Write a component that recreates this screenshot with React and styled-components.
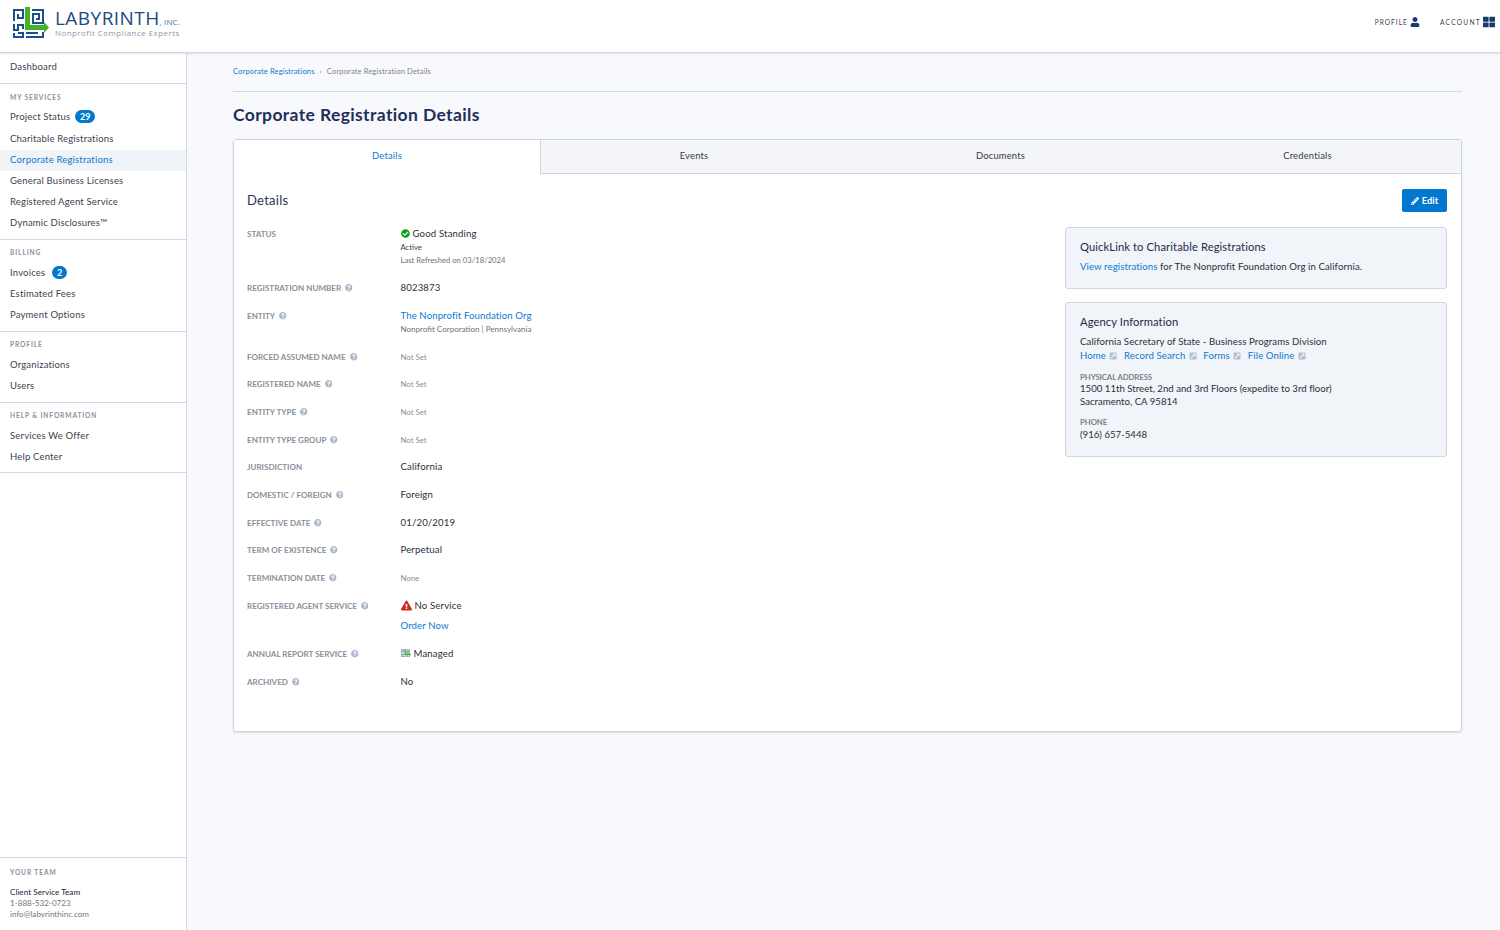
import React from "react";
import styled, { createGlobalStyle } from "styled-components";
import {
  FaCheckCircle,
  FaExclamationTriangle,
  FaExternalLinkSquareAlt,
  FaPencilAlt,
  FaQuestionCircle,
  FaThLarge,
  FaUser,
} from "react-icons/fa";

const GlobalStyle = createGlobalStyle`
  html, body { margin: 0; padding: 0; }
  body {
    background: #f8f9fc;
    color: #2b2f3a;
    font-family: "Lato", "Open Sans", sans-serif;
    font-size: 10px;
  }
  * { box-sizing: border-box; }
  a { color: #0b7ad1; text-decoration: none; }
`;

const Page = styled.div`
  width: 1500px;
  height: 930px;
  display: flex;
  flex-direction: column;
  overflow: hidden;
`;

const Header = styled.header`
  height: 53px;
  flex: none;
  background: #fff;
  border-bottom: 1px solid #d3d9e4;
  box-shadow: 0 1px 2px rgba(50, 60, 90, 0.12);
  display: flex;
  align-items: center;
  justify-content: space-between;
  padding: 0 5px 0 12px;
  position: relative;
  z-index: 2;
`;

const Brand = styled.div`
  display: flex;
  align-items: center;
  gap: 6px;
  margin-top: -7px;
`;

const BrandText = styled.div`
  display: flex;
  flex-direction: column;
`;

const BrandName = styled.div`
  font-size: 19px;
  line-height: 20px;
  letter-spacing: 0.45px;
  color: #1d4a85;
  font-family: "Open Sans", sans-serif;
  white-space: nowrap;
  small {
    font-size: 8px;
    line-height: 0;
    letter-spacing: 0.1px;
    color: #3f6ea8;
  }
`;

const BrandTag = styled.div`
  font-family: "Open Sans", sans-serif;
  font-size: 7.9px;
  line-height: 10px;
  letter-spacing: 0.5px;
  color: #8c97aa;
  white-space: nowrap;
`;

const HeaderNav = styled.nav`
  display: flex;
  align-items: center;
  gap: 20px;
  margin-top: -8px;
`;

const HeaderLink = styled.div`
  display: flex;
  align-items: center;
  gap: 2px;
  font-size: 6.6px;
  letter-spacing: ${(p) => p.$spacing || 1}px;
  color: #3a3f55;
  svg {
    color: #1b3a6b;
    font-size: ${(p) => p.$iconSize || 10}px;
  }
`;

const Body = styled.div`
  flex: 1;
  display: flex;
  min-height: 0;
`;

const Sidebar = styled.aside`
  width: 187px;
  flex: none;
  background: #fff;
  border-right: 1px solid #d3d9e4;
  display: flex;
  flex-direction: column;
`;

const NavGroup = styled.div`
  border-bottom: 1px solid #d3d9e4;
  padding: ${(p) => p.$pad || "6px 0 6px"};
`;

const NavHeading = styled.div`
  font-size: 6.6px;
  font-weight: 700;
  line-height: 12px;
  letter-spacing: 0.9px;
  color: #8b909c;
  padding: 0 ${(p) => (p.$flush ? 0 : 10)}px;
  margin-bottom: ${(p) => p.$gap ?? 4}px;
  text-transform: uppercase;
`;

const NavItem = styled.a`
  display: flex;
  align-items: center;
  height: ${(p) => p.$height || 21}px;
  padding: 0 10px ${(p) => (p.$height ? 2 : 0)}px;
  font-size: 9.5px;
  letter-spacing: 0.18px;
  color: #3d4250;
  ${(p) =>
    p.$active &&
    `
    color: #0b7ad1;
    background: #f0f3f7;
    margin: 1px 0 -1px;
    padding-bottom: 2px;
  `}
`;

const Pill = styled.span`
  margin-left: ${(p) => p.$gap || 5}px;
  min-width: ${(p) => (p.$wide ? 20 : 15)}px;
  height: 13px;
  border-radius: 7px;
  background: #0277d0;
  color: #fff;
  font-size: 9px;
  font-weight: 700;
  line-height: 13px;
  text-align: center;
`;

const TeamBlock = styled.div`
  margin-top: auto;
  border-top: 1px solid #d3d9e4;
  padding: 8px 10px 10px;
`;

const TeamName = styled.div`
  margin-top: 9px;
  font-size: 8.2px;
  line-height: 11px;
  color: #1f2330;
`;

const TeamLine = styled.div`
  font-size: 8.1px;
  line-height: 11px;
  color: #70757f;
`;

const Main = styled.main`
  flex: 1;
  padding: 0 38px 0 46px;
`;

const Breadcrumb = styled.div`
  height: 39px;
  padding-top: 13px;
  line-height: 10px;
  font-size: 7.6px;
  letter-spacing: 0.12px;
  color: #7d828c;
  border-bottom: 1px solid #d3d9e4;
  display: flex;
  gap: 5px;
`;

const PageTitle = styled.h1`
  margin: 0;
  height: 47px;
  padding-top: 12px;
  font-size: 17.5px;
  line-height: 22px;
  font-weight: 700;
  letter-spacing: 0.37px;
  color: #1e2f5a;
`;

const Panel = styled.section`
  height: 593px;
  background: #fff;
  border: 1px solid #cfd6e2;
  border-radius: 3px;
  box-shadow: 0 1px 2px rgba(50, 60, 90, 0.15);
`;

const Tabs = styled.div`
  display: grid;
  grid-template-columns: 306px 1fr 1fr 1fr;
  height: 34px;
`;

const Tab = styled.div`
  display: flex;
  align-items: center;
  justify-content: center;
  padding-bottom: 2px;
  font-size: 9.4px;
  letter-spacing: 0.2px;
  color: ${(p) => (p.$active ? "#0b7ad1" : "#363b48")};
  background: ${(p) => (p.$active ? "#fff" : "#f3f5f8")};
  border-bottom: 1px solid ${(p) => (p.$active ? "transparent" : "#cfd6e2")};
  border-left: ${(p) => (p.$divided ? "1px solid #cfd6e2" : "none")};
`;

const PanelBody = styled.div`
  display: flex;
  justify-content: space-between;
  padding: 15px 14px 0 13px;
`;

const Details = styled.div`
  flex: none;
  width: 600px;
`;

const SectionTitle = styled.h2`
  margin: 0 0 15px;
  font-size: 13px;
  line-height: 23px;
  font-weight: 400;
  letter-spacing: 0.27px;
  color: #2a3350;
`;

const Row = styled.div`
  display: grid;
  grid-template-columns: 153.5px 1fr;
  min-height: ${(p) => p.$height || 27.75}px;
`;

const Label = styled.div`
  display: flex;
  align-items: center;
  align-self: start;
  height: 14px;
  gap: 4px;
  font-size: 8.05px;
  font-weight: 700;
  text-transform: uppercase;
  color: #8a8f99;
  svg {
    color: #a9b6c8;
    font-size: 7.5px;
  }
`;

const Value = styled.div`
  font-size: 9.6px;
  line-height: 14px;
  letter-spacing: 0.15px;
  color: ${(p) => (p.$muted ? "#8a8f99" : "#2b2f3a")};
  ${(p) => p.$muted && "font-size: 7.8px; letter-spacing: 0;"}
`;

const IconValue = styled.div`
  display: flex;
  align-items: center;
  gap: 3px;
  height: 14px;
  margin: -1px 0 ${(p) => p.$bottom || 0}px;
  font-size: 9.6px;
  letter-spacing: 0.15px;
  svg {
    flex: none;
  }
`;

const SubLine = styled.div`
  font-size: ${(p) => p.$size || 7.7}px;
  line-height: 13px;
  color: ${(p) => p.$color || "#6d727d"};
`;

const LinkLine = styled.a`
  display: block;
  margin-top: ${(p) => p.$top || 0}px;
  font-size: 9.6px;
  line-height: 14px;
  letter-spacing: 0.1px;
`;

const Aside = styled.div`
  width: 382px;
  flex: none;
  display: flex;
  flex-direction: column;
`;

const EditButton = styled.button`
  align-self: flex-end;
  width: 45px;
  height: 23px;
  border: none;
  border-radius: 2px;
  background: #0277d0;
  color: #fff;
  font-family: inherit;
  font-size: 9.4px;
  font-weight: 700;
  display: flex;
  align-items: center;
  justify-content: center;
  gap: 3px;
  margin-bottom: 15px;
  svg {
    font-size: 8px;
  }
`;

const InfoBox = styled.div`
  background: #f1f4f8;
  border: 1px solid #cfd6e2;
  border-radius: 3px;
  padding: 12px 14px;
  margin-bottom: 13px;
  height: ${(p) => p.$height}px;
  font-size: 9.6px;
  letter-spacing: 0.1px;
  color: #2b2f3a;
`;

const BoxTitle = styled.div`
  font-size: 11.2px;
  line-height: 14px;
  letter-spacing: 0.1px;
  color: #1f2a4a;
  margin-bottom: 6px;
`;

const BoxLine = styled.div`
  line-height: 13px;
  white-space: nowrap;
  letter-spacing: ${(p) => (p.$tight ? "0.02px" : "inherit")};
`;

const AgencyLinks = styled.div`
  display: flex;
  gap: 6.5px;
  line-height: 15px;
  margin-bottom: 10px;
  a {
    display: flex;
    align-items: center;
    gap: 3.5px;
  }
  svg {
    color: #b4bfcd;
    font-size: 8px;
  }
`;

const FieldCaption = styled.div`
  font-size: 7.8px;
  font-weight: 700;
  line-height: 9px;
  letter-spacing: -0.1px;
  color: #7d828c;
  margin-top: ${(p) => p.$top || 0}px;
  margin-bottom: ${(p) => p.$bottom || 0}px;
`;

function LogoMark({ width = 37 }) {
  return (
    <svg width={width} height={(width * 31) / 37} viewBox="0 0 37 31" fill="none">
      <g stroke="#1d4f8f" strokeWidth="2">
        <path d="M2 14V3h9v8H6V7" />
        <path d="M2 17v6h4v-5h5v4" />
        <path d="M2 26v4h9v-4H6" />
        <path d="M20 3h11v13H21V7h6v5h-3" />
        <path d="M14 30h17v-5" />
        <path d="M14 26h12" />
      </g>
      <path d="M13 0h5v18h14v-3l5 5.5-5 5.5v-3H13z" fill="#3fb426" />
    </svg>
  );
}

const Help = () => <FaQuestionCircle />;

const simpleRows = [
  { label: "Forced Assumed Name", muted: true, value: "Not Set", height: 27 },
  { label: "Registered Name", muted: true, value: "Not Set", height: 28 },
  { label: "Entity Type", muted: true, value: "Not Set", height: 28 },
  { label: "Entity Type Group", muted: true, value: "Not Set", height: 27 },
  { label: "Jurisdiction", value: "California", noHelp: true, height: 28 },
  { label: "Domestic / Foreign", value: "Foreign", height: 28 },
  { label: "Effective Date", value: "01/20/2019", height: 27 },
  { label: "Term of Existence", value: "Perpetual", height: 28 },
  { label: "Termination Date", muted: true, value: "None", height: 28 },
];

export default function App() {
  return (
    <Page>
      <GlobalStyle />
      <Header>
        <Brand>
          <LogoMark />
          <BrandText>
            <BrandName>
              LABYRINTH<small>, INC.</small>
            </BrandName>
            <BrandTag>Nonprofit Compliance Experts</BrandTag>
          </BrandText>
        </Brand>
        <HeaderNav>
          <HeaderLink>
            PROFILE <FaUser />
          </HeaderLink>
          <HeaderLink $iconSize={12} $spacing={1.3}>
            ACCOUNT <FaThLarge />
          </HeaderLink>
        </HeaderNav>
      </Header>
      <Body>
        <Sidebar>
          <NavGroup $pad="3px 0 6px">
            <NavItem>Dashboard</NavItem>
          </NavGroup>
          <NavGroup $pad="7px 0 6px">
            <NavHeading $gap={3}>My Services</NavHeading>
            <NavItem $height={22}>
              Project Status <Pill $wide>29</Pill>
            </NavItem>
            <NavItem>Charitable Registrations</NavItem>
            <NavItem $active>Corporate Registrations</NavItem>
            <NavItem>General Business Licenses</NavItem>
            <NavItem>Registered Agent Service</NavItem>
            <NavItem>Dynamic Disclosures™</NavItem>
          </NavGroup>
          <NavGroup>
            <NavHeading>Billing</NavHeading>
            <NavItem>
              Invoices <Pill $gap={7}>2</Pill>
            </NavItem>
            <NavItem>Estimated Fees</NavItem>
            <NavItem>Payment Options</NavItem>
          </NavGroup>
          <NavGroup>
            <NavHeading>Profile</NavHeading>
            <NavItem>Organizations</NavItem>
            <NavItem>Users</NavItem>
          </NavGroup>
          <NavGroup $pad="6px 0 5px">
            <NavHeading>Help &amp; Information</NavHeading>
            <NavItem>Services We Offer</NavItem>
            <NavItem>Help Center</NavItem>
          </NavGroup>
          <TeamBlock>
            <NavHeading $flush $gap={3}>
              Your Team
            </NavHeading>
            <TeamName>Client Service Team</TeamName>
            <TeamLine>1-888-532-0723</TeamLine>
            <TeamLine>info@labyrinthinc.com</TeamLine>
          </TeamBlock>
        </Sidebar>
        <Main>
          <Breadcrumb>
            <a href="#registrations">Corporate Registrations</a>
            <span>›</span>
            <span>Corporate Registration Details</span>
          </Breadcrumb>
          <PageTitle>Corporate Registration Details</PageTitle>
          <Panel>
            <Tabs>
              <Tab $active>Details</Tab>
              <Tab $divided>Events</Tab>
              <Tab>Documents</Tab>
              <Tab>Credentials</Tab>
            </Tabs>
            <PanelBody>
              <Details>
                <SectionTitle>Details</SectionTitle>
                <Row $height={54}>
                  <Label>Status</Label>
                  <div>
                    <IconValue $bottom={1}>
                      <FaCheckCircle color="#12a01c" size={9} />
                      Good Standing
                    </IconValue>
                    <SubLine $color="#3d4250">Active</SubLine>
                    <SubLine>Last Refreshed on 03/18/2024</SubLine>
                  </div>
                </Row>
                <Row $height={28}>
                  <Label>
                    Registration Number <Help />
                  </Label>
                  <Value>8023873</Value>
                </Row>
                <Row $height={41}>
                  <Label>
                    Entity <Help />
                  </Label>
                  <div>
                    <LinkLine href="#entity">The Nonprofit Foundation Org</LinkLine>
                    <SubLine $size={8.05}>Nonprofit Corporation | Pennsylvania</SubLine>
                  </div>
                </Row>
                {simpleRows.map((row) => (
                  <Row key={row.label} $height={row.height}>
                    <Label>
                      {row.label} {!row.noHelp && <Help />}
                    </Label>
                    <Value $muted={row.muted}>{row.value}</Value>
                  </Row>
                ))}
                <Row $height={48}>
                  <Label>
                    Registered Agent Service <Help />
                  </Label>
                  <div>
                    <IconValue>
                      <FaExclamationTriangle color="#d0281c" size={11} />
                      No Service
                    </IconValue>
                    <LinkLine href="#order" $top={7}>
                      Order Now
                    </LinkLine>
                  </div>
                </Row>
                <Row $height={28}>
                  <Label>
                    Annual Report Service <Help />
                  </Label>
                  <IconValue>
                    <LogoMark width={10} />
                    Managed
                  </IconValue>
                </Row>
                <Row>
                  <Label>
                    Archived <Help />
                  </Label>
                  <Value>No</Value>
                </Row>
              </Details>
              <Aside>
                <EditButton>
                  <FaPencilAlt /> Edit
                </EditButton>
                <InfoBox $height={62}>
                  <BoxTitle>QuickLink to Charitable Registrations</BoxTitle>
                  <BoxLine>
                    <a href="#registrations">View registrations</a> for The
                    Nonprofit Foundation Org in California.
                  </BoxLine>
                </InfoBox>
                <InfoBox $height={155}>
                  <BoxTitle>Agency Information</BoxTitle>
                  <BoxLine>California Secretary of State - Business Programs Division</BoxLine>
                  <AgencyLinks>
                    <a href="#home">
                      Home <FaExternalLinkSquareAlt />
                    </a>
                    <a href="#search">
                      Record Search <FaExternalLinkSquareAlt />
                    </a>
                    <a href="#forms">
                      Forms <FaExternalLinkSquareAlt />
                    </a>
                    <a href="#file">
                      File Online <FaExternalLinkSquareAlt />
                    </a>
                  </AgencyLinks>
                  <FieldCaption>PHYSICAL ADDRESS</FieldCaption>
                  <BoxLine $tight>1500 11th Street, 2nd and 3rd Floors (expedite to 3rd floor)</BoxLine>
                  <BoxLine $tight>Sacramento, CA 95814</BoxLine>
                  <FieldCaption $top={10} $bottom={1}>
                    PHONE
                  </FieldCaption>
                  <BoxLine $tight>(916) 657-5448</BoxLine>
                </InfoBox>
              </Aside>
            </PanelBody>
          </Panel>
        </Main>
      </Body>
    </Page>
  );
}
